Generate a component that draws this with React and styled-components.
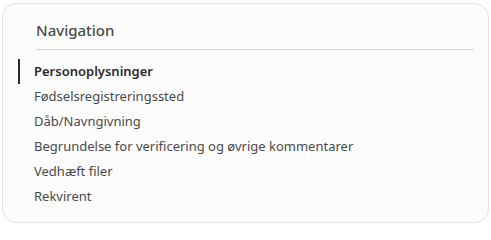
import React from 'react';
import styled, { createGlobalStyle } from 'styled-components';

const GlobalStyle = createGlobalStyle`
  body {
    margin: 0;
    background: #ffffff;
    font-family: "Segoe UI", "Noto Sans", "Open Sans", sans-serif;
  }
`;

const Card = styled.nav`
  box-sizing: border-box;
  margin: 3px 0 0 2px;
  width: 487px;
  height: 220px;
  background: #fcfcfc;
  border: 1px solid #e3e3e6;
  border-radius: 14px;
  padding: 16px 14px 0 15px;
`;

const Heading = styled.h2`
  margin: 0 0 0 18px;
  padding-bottom: 9px;
  border-bottom: 1px solid #d2d2d2;
  font-size: 15px;
  font-weight: 500;
  color: #4a4a4a;
  line-height: 20px;
`;

const List = styled.ul`
  list-style: none;
  margin: 9px 0 0;
  padding: 0;
  display: flex;
  flex-direction: column;
`;

const Item = styled.li`
  border-left: 2px solid ${p => (p.$active ? '#2b2b2b' : 'transparent')};
  padding: 0 0 0 14px;
  height: 25px;
  line-height: 25px;
  font-size: 13px;
  font-weight: ${p => (p.$active ? 600 : 400)};
  color: ${p => (p.$active ? '#2b2b2b' : '#4a4a4a')};
  white-space: nowrap;
`;

const links = [
  'Personoplysninger',
  'Fødselsregistreringssted',
  'Dåb/Navngivning',
  'Begrundelse for verificering og øvrige kommentarer',
  'Vedhæft filer',
  'Rekvirent',
];

export default function App() {
  return (
    <>
      <GlobalStyle />
      <Card>
        <Heading>Navigation</Heading>
        <List>
          {links.map((l, i) => (
            <Item key={l} $active={i === 0}>{l}</Item>
          ))}
        </List>
      </Card>
    </>
  );
}
